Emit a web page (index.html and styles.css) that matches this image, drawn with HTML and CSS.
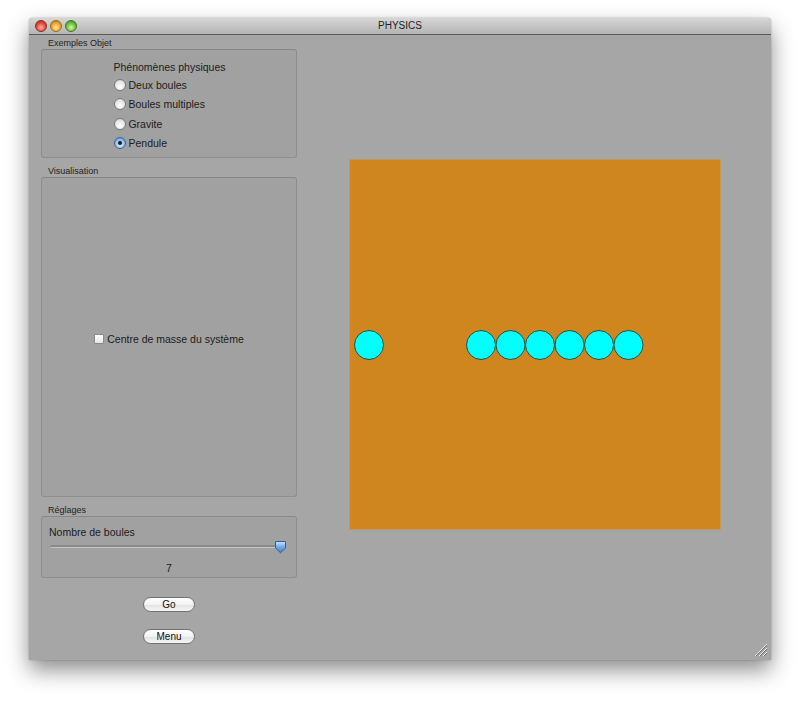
FILE: index.html
```html
<!DOCTYPE html>
<html>
<head>
<meta charset="utf-8">
<link rel="stylesheet" href="styles.css">
</head>
<body>
<div class="window">
  <div class="titlebar">
    <div class="lights">
      <span class="light red"></span>
      <span class="light yellow"></span>
      <span class="light green"></span>
    </div>
    <div class="title">PHYSICS</div>
  </div>
  <div class="content">
    <div class="left">
      <div class="group-label">Exemples Objet</div>
      <div class="box box-examples">
        <div class="radio-group">
          <div class="radio-title">Phénomènes physiques</div>
          <div class="radio-row"><span class="radio"></span>Deux boules</div>
          <div class="radio-row"><span class="radio"></span>Boules multiples</div>
          <div class="radio-row"><span class="radio"></span>Gravite</div>
          <div class="radio-row"><span class="radio checked"></span>Pendule</div>
        </div>
      </div>
      <div class="group-label">Visualisation</div>
      <div class="box box-visu">
        <div class="check-row"><span class="checkbox"></span>Centre de masse du système</div>
      </div>
      <div class="group-label">Réglages</div>
      <div class="box box-settings">
        <div class="settings-title">Nombre de boules</div>
        <div class="slider">
          <div class="track"></div>
          <svg class="thumb" width="13" height="14" viewBox="0 0 13 14">
            <defs>
              <linearGradient id="tg" x1="0" y1="0" x2="0" y2="1">
                <stop offset="0" stop-color="#cfe4fb"/>
                <stop offset="0.5" stop-color="#6ea8ea"/>
                <stop offset="1" stop-color="#3f7fd0"/>
              </linearGradient>
            </defs>
            <path d="M1.5 1.5 H11.5 V8 L6.5 12.8 L1.5 8 Z" fill="url(#tg)" stroke="#2f5d96" stroke-width="1"/>
          </svg>
        </div>
        <div class="slider-value">7</div>
      </div>
      <div class="buttons">
        <button class="btn">Go</button>
        <button class="btn">Menu</button>
      </div>
    </div>
    <div class="right">
      <div class="canvas">
        <svg width="370" height="369" viewBox="0 0 370 369">
          <g fill="#00ffff" stroke="#2a4a40" stroke-width="1">
            <circle cx="19" cy="185" r="14.5"/>
            <circle cx="131" cy="185" r="14.5"/>
            <circle cx="160.5" cy="185" r="14.5"/>
            <circle cx="190" cy="185" r="14.5"/>
            <circle cx="219.5" cy="185" r="14.5"/>
            <circle cx="249" cy="185" r="14.5"/>
            <circle cx="278.5" cy="185" r="14.5"/>
          </g>
        </svg>
      </div>
    </div>
    <svg class="grip" width="14" height="14" viewBox="0 0 14 14">
      <g stroke="#eeeeee" stroke-width="1">
        <line x1="13" y1="1" x2="1" y2="13"/>
        <line x1="13" y1="5" x2="5" y2="13"/>
        <line x1="13" y1="9" x2="9" y2="13"/>
      </g>
      <g stroke="#6e6e6e" stroke-width="1">
        <line x1="13" y1="2" x2="2" y2="13"/>
        <line x1="13" y1="6" x2="6" y2="13"/>
        <line x1="13" y1="10" x2="10" y2="13"/>
      </g>
    </svg>
  </div>
</div>
</body>
</html>
```
FILE: styles.css
```css
html, body {
  margin: 0;
  padding: 0;
  background: #ffffff;
}
body {
  font-family: "Liberation Sans", Arial, sans-serif;
  color: #1c1c1c;
  width: 800px;
  height: 701px;
  overflow: hidden;
}
.window {
  margin: 18px 0 0 29px;
  width: 742px;
  height: 642px;
  background: #a6a6a6;
  border-radius: 4px 4px 0 0;
  box-shadow: 0 10px 22px rgba(0, 0, 0, 0.45), 0 0 2px rgba(0,0,0,0.3);
  display: flex;
  flex-direction: column;
}
.titlebar {
  height: 16px;
  background: linear-gradient(#d6d6d6, #b4b4b4);
  border-bottom: 1px solid #5c5c5c;
  border-radius: 4px 4px 0 0;
  display: flex;
  align-items: center;
  position: relative;
}
.lights {
  display: flex;
  gap: 3px;
  margin-left: 6px;
}
.light {
  width: 12px;
  height: 12px;
  border-radius: 50%;
  box-sizing: border-box;
}
.red { background: radial-gradient(circle at 50% 65%, #ffb3a8, #e3473a 55%, #a8231a); border: 1px solid #8c2a22; }
.yellow { background: radial-gradient(circle at 50% 65%, #ffe7a0, #e9a52a 55%, #b2741a); border: 1px solid #9a6a1e; }
.green { background: radial-gradient(circle at 50% 65%, #d8f5b0, #6cbc3c 55%, #3c8a22); border: 1px solid #3e7a26; }
.title {
  position: absolute;
  left: 0;
  right: 0;
  text-align: center;
  font-size: 10px;
  color: #222;
  line-height: 16px;
}
.content {
  flex: 1;
  display: flex;
  position: relative;
}
.left {
  width: 256px;
  margin-left: 12px;
  padding-top: 2px;
  display: flex;
  flex-direction: column;
}
.group-label {
  font-size: 9px;
  line-height: 12px;
  height: 12px;
  padding-left: 7px;
  color: #222;
}
.box {
  box-sizing: border-box;
  border: 1px solid #8e8e8e;
  border-top-color: #888;
  border-radius: 3px;
  background: #a1a1a1;
}
.box-examples {
  height: 109px;
  margin-bottom: 7px;
  display: flex;
  justify-content: center;
}
.radio-group {
  padding-top: 10px;
  margin-left: 1px;
}
.radio-title {
  font-size: 10.5px;
  line-height: 14px;
  height: 14px;
  margin-bottom: 1px;
}
.radio-row {
  display: flex;
  align-items: center;
  font-size: 10.5px;
  height: 19.5px;
}
.radio {
  width: 12px;
  height: 12px;
  box-sizing: border-box;
  border-radius: 50%;
  border: 1px solid #7a7a7a;
  background: radial-gradient(circle at 50% 70%, #ffffff, #e6e6e6 60%, #c8c8c8);
  margin-right: 2px;
  margin-left: 1px;
  position: relative;
}
.radio.checked {
  border-color: #3a5f8e;
  background: radial-gradient(circle at 50% 70%, #d8ecff, #8bbcf0 60%, #4d8ad4);
}
.radio.checked::after {
  content: "";
  position: absolute;
  left: 3px;
  top: 3px;
  width: 4px;
  height: 4px;
  border-radius: 50%;
  background: #1a1a1a;
}
.box-visu {
  height: 320px;
  margin-bottom: 7px;
  display: flex;
  align-items: center;
  justify-content: center;
}
.check-row {
  display: flex;
  align-items: center;
  font-size: 10.5px;
  margin-top: 3px;
}
.checkbox {
  width: 10px;
  height: 10px;
  box-sizing: border-box;
  border: 1px solid #8a8a8a;
  background: linear-gradient(#ffffff, #e4e4e4);
  margin-right: 3px;
  border-radius: 1px;
}
.box-settings {
  height: 62px;
  padding: 8px 7px 0 7px;
}
.settings-title {
  font-size: 10.5px;
  line-height: 14px;
}
.slider {
  position: relative;
  height: 12px;
  margin-top: 1px;
}
.track {
  position: absolute;
  left: 1px;
  right: 10px;
  top: 5px;
  height: 2px;
  border-radius: 1px;
  background: #8a8a8a;
  border-bottom: 1px solid #c4c4c4;
}
.thumb {
  position: absolute;
  right: 2px;
  top: 0px;
}
.slider-value {
  text-align: center;
  font-size: 10.5px;
  line-height: 14px;
  margin-top: 9px;
}
.buttons {
  display: flex;
  flex-direction: column;
  align-items: center;
  gap: 17px;
  margin-top: 19px;
}
.btn {
  width: 52px;
  height: 15px;
  padding: 0;
  border: 1px solid #707070;
  border-radius: 8px;
  background: linear-gradient(#ffffff, #f2f2f2 50%, #e2e2e2 51%, #f6f6f6);
  font-family: "Liberation Sans", Arial, sans-serif;
  font-size: 10px;
  line-height: 13px;
  color: #111;
}
.right {
  padding-left: 53px;
  padding-top: 125px;
}
.canvas {
  width: 370px;
  height: 369px;
  background: #d0861e;
  box-shadow: 0 0 0 1px #c09a64;
}
.canvas svg {
  display: block;
}
.grip {
  position: absolute;
  right: 3px;
  bottom: 3px;
}
```
